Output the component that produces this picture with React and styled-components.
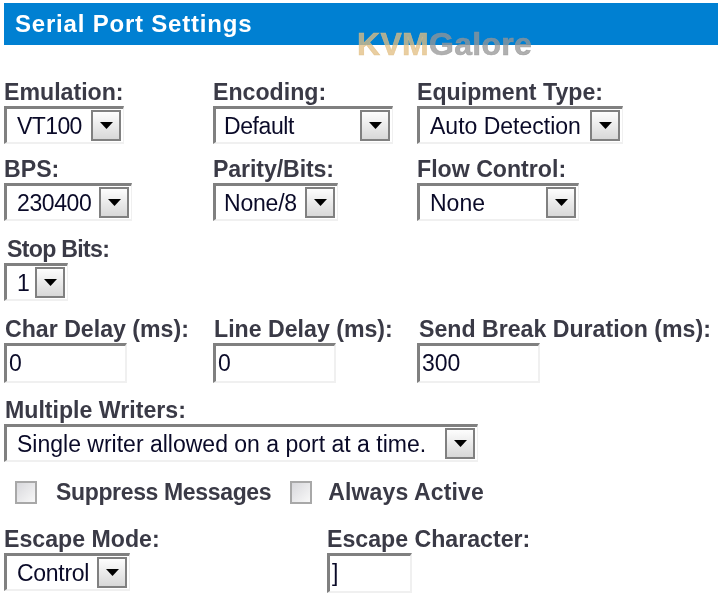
import React from 'react'
import styled, { createGlobalStyle } from 'styled-components'

const Global = createGlobalStyle`
  html, body {
    margin: 0;
    background: #fff;
  }
  * {
    box-sizing: border-box;
  }
`;

const Page = styled.div`
  position: relative;
  width: 718px;
  height: 600px;
  overflow: hidden;
  padding: 3px 0 0 4px;
  font-family: "Liberation Sans", Arial, sans-serif;
  filter: blur(0.4px);
`;

const Banner = styled.h1`
  margin: 0 0 35px;
  height: 42px;
  padding-left: 11px;
  background: #0080d2;
  color: #fff;
  font-size: 24px;
  font-weight: 700;
  line-height: 41px;
  letter-spacing: 0.8px;
`;

const Watermark = styled.div`
  position: absolute;
  top: 26px;
  left: 357px;
  font-size: 32px;
  font-weight: 700;
  line-height: 36px;
  letter-spacing: 0.3px;
  color: rgba(150, 150, 150, 0.75);
  -webkit-text-stroke: 0.6px currentColor;
`;

const Kvm = styled.span`
  color: rgba(225, 190, 130, 0.75);
`;

const Row = styled.div`
  display: grid;
  grid-template-columns: ${(p) => p.$columns || '209px 204px 1fr'};
  margin-bottom: ${(p) => p.$gap || 12}px;
`;

const Field = styled.div`
  display: flex;
  flex-direction: column;
  align-items: flex-start;
`;

const Label = styled.label`
  height: 26px;
  padding-left: ${(p) => p.$inset || 0}px;
  color: #3a3a46;
  font-size: 23.15px;
  font-weight: 700;
  line-height: 24px;
  letter-spacing: ${(p) => p.$track || 0}px;
  white-space: nowrap;
`;

const Select = styled.div`
  display: flex;
  align-items: center;
  justify-content: space-between;
  width: ${(p) => p.$width}px;
  height: 38px;
  padding: 0 2px 0 ${(p) => p.$pad || 10}px;
  border-top: 3px solid #808080;
  border-left: 3px solid #808080;
  border-right: 1px solid #f0f0f0;
  border-bottom: 2px solid #f0f0f0;
  color: #0a0a28;
  font-size: 23px;
  letter-spacing: ${(p) => p.$track || 0}px;
  white-space: nowrap;
`;

const Value = styled.span`
  position: relative;
  top: 1px;
`;

const Arrow = styled.span`
  display: flex;
  align-items: center;
  justify-content: center;
  flex: none;
  width: 30px;
  height: 31px;
  border: 2px solid #808080;
  background: linear-gradient(#fdfdfd, #d8d8d8);
`;

const TextBox = styled.input`
  display: block;
  width: ${(p) => p.$width}px;
  height: 40px;
  padding: 0 0 0 2px;
  border-style: solid;
  border-width: 3px 2px 2px 3px;
  border-color: #808080 #f0f0f0 #f0f0f0 #808080;
  outline: none;
  color: #0a0a28;
  font-family: inherit;
  font-size: 23px;
`;

const CheckRow = styled.div`
  display: flex;
  align-items: center;
  height: 28px;
  margin: 16px 0 21px 11px;
`;

const CheckBox = styled.input`
  appearance: none;
  flex: none;
  width: 22px;
  height: 23px;
  margin: 0 ${(p) => p.$gap}px 0 0;
  border: 2px solid #a8a8a8;
  background: linear-gradient(135deg, #d8d8dc, #f8f8f8);
`;

const CheckLabel = styled.label`
  margin-right: ${(p) => p.$gap || 0}px;
  color: #3a3a46;
  font-size: 23px;
  font-weight: 700;
  letter-spacing: ${(p) => p.$track || 0}px;
  white-space: nowrap;
`;

function Drop({ width, pad, track, children }) {
  return (
    <Select $width={width} $pad={pad} $track={track}>
      <Value>{children}</Value>
      <Arrow>
        <svg width="13" height="7" viewBox="0 0 13 7">
          <path d="M0 0h13L6.5 7z" fill="#000" />
        </svg>
      </Arrow>
    </Select>
  )
}

function App() {
  return (
    <Page>
      <Global />
      <Banner>Serial Port Settings</Banner>
      <Watermark><Kvm>KVM</Kvm>Galore</Watermark>

      <Row $gap={13}>
        <Field><Label>Emulation:</Label><Drop width={120} track={-0.6}>VT100</Drop></Field>
        <Field><Label>Encoding:</Label><Drop width={180} pad={8} track={-0.4}>Default</Drop></Field>
        <Field><Label>Equipment Type:</Label><Drop width={206}>Auto Detection</Drop></Field>
      </Row>
      <Row $gap={16}>
        <Field><Label>BPS:</Label><Drop width={128} track={-0.4}>230400</Drop></Field>
        <Field><Label $track={-0.1}>Parity/Bits:</Label><Drop width={125} pad={8} track={-0.2}>None/8</Drop></Field>
        <Field><Label>Flow Control:</Label><Drop width={162}>None</Drop></Field>
      </Row>
      <Row $gap={16}>
        <Field><Label $inset={3} $track={-0.7}>Stop Bits:</Label><Drop width={64}>1</Drop></Field>
      </Row>
      <Row $gap={15}>
        <Field><Label $inset={1}>Char Delay (ms):</Label><TextBox $width={123} defaultValue="0" /></Field>
        <Field><Label $inset={1}>Line Delay (ms):</Label><TextBox $width={123} defaultValue="0" /></Field>
        <Field><Label $inset={2}>Send Break Duration (ms):</Label><TextBox $width={123} defaultValue="300" /></Field>
      </Row>
      <Row $gap={0} $columns="1fr">
        <Field><Label $inset={1}>Multiple Writers:</Label><Drop width={474}>Single writer allowed on a port at a time.</Drop></Field>
      </Row>
      <CheckRow>
        <CheckBox type="checkbox" $gap={19} />
        <CheckLabel $gap={19} $track={-0.35}>Suppress Messages</CheckLabel>
        <CheckBox type="checkbox" $gap={16} />
        <CheckLabel $track={0.15}>Always Active</CheckLabel>
      </CheckRow>
      <Row $gap={0} $columns="323px 1fr">
        <Field><Label>Escape Mode:</Label><Drop width={126} track={-0.3}>Control</Drop></Field>
        <Field><Label>Escape Character:</Label><TextBox $width={85} defaultValue="]" /></Field>
      </Row>
    </Page>
  )
}

export default App
